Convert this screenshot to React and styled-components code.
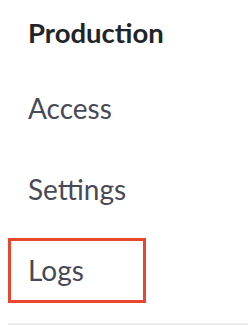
import React from 'react'
import styled, { createGlobalStyle } from 'styled-components'

const GlobalStyle = createGlobalStyle`
	html, body {
		margin: 0;
		padding: 0;
		background: #ffffff;
	}
	body {
		font-family: Lato, "Open Sans", sans-serif;
	}
`

const Nav = styled.nav`
	width: 248px;
	height: 325px;
	display: flex;
	flex-direction: column;
	padding: 0 0 0 8px;
	box-sizing: border-box;
	overflow: hidden;
`

const Heading = styled.h2`
	margin: 0;
	padding: 15px 0 0 20px;
	height: 60px;
	box-sizing: border-box;
	font-size: 27.5px;
	font-weight: 700;
	color: #222428;
	line-height: 36px;
`

const Item = styled.a`
	display: flex;
	align-items: center;
	width: 138px;
	height: 66px;
	margin-top: 16px;
	box-sizing: border-box;
	padding-left: ${({ $active }) => ($active ? '17px' : '20px')};
	border: ${({ $active }) => ($active ? '3px solid #e8472d' : 'none')};
	font-size: 28px;
	color: #474a56;
	text-decoration: none;
`

const Divider = styled.div`
	margin-top: 20px;
	height: 2px;
	background: #ebebeb;
`

const items = ['Access', 'Settings', 'Logs']

const App = () => (
	<>
		<GlobalStyle />
		<Nav>
			<Heading>Production</Heading>
			{items.map((item) => (
				<Item key={item} $active={item === 'Logs'}>
					{item}
				</Item>
			))}
			<Divider />
		</Nav>
	</>
)

export default App
